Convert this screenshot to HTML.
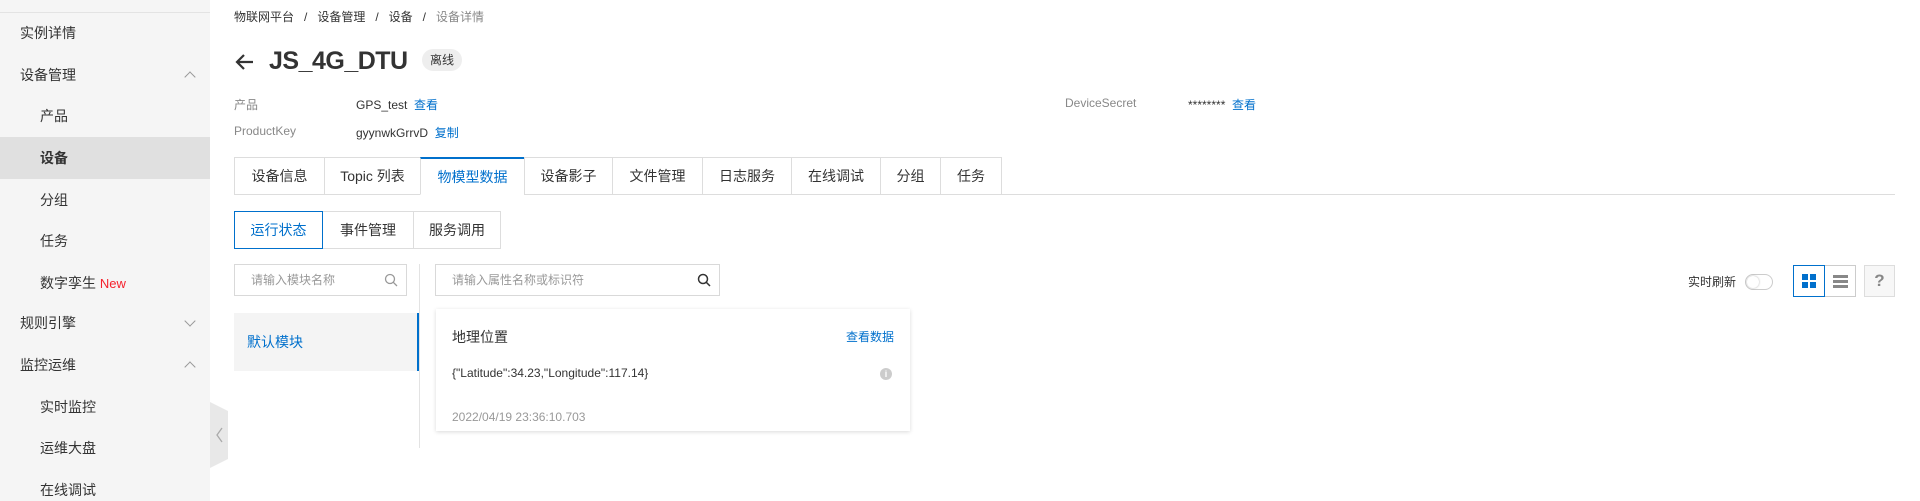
<!DOCTYPE html>
<html><head><meta charset="utf-8"><style>
*{margin:0;padding:0;box-sizing:border-box}
body{width:1920px;height:501px;overflow:hidden;background:#fff;font-family:"Liberation Sans","Noto Sans CJK SC",sans-serif;color:#333;position:relative;font-size:14px}
.a{position:absolute;white-space:nowrap}
.side{position:absolute;left:0;top:0;width:210px;height:501px;background:#f5f5f5}
.side .ln{position:absolute;left:0;top:12px;width:210px;height:1px;background:#e3e3e3}
.si{position:absolute;left:20px;font-size:14px;color:#333;line-height:20px}
.sub{left:40px}
.chev{position:absolute;left:186px;width:8px;height:8px;border-left:1.3px solid #999;border-top:1.3px solid #999}
.up{transform:rotate(45deg)}
.dn{transform:rotate(225deg)}
.blue{color:#0070cc}
.grey{color:#888}
.tabs{position:absolute;top:157px;left:234px;height:38px;display:flex}
.tab{height:38px;border:1px solid #ddd;border-right:none;display:flex;align-items:center;justify-content:center;font-size:14px;color:#333;background:#fff}
.tab:last-child{border-right:1px solid #ddd}
.inp{position:absolute;border:1px solid #d9d9d9;height:32px;font-size:12px;color:#999;line-height:30px;padding-left:16px}
</style></head><body>
<div class="side">
<div class="ln"></div>
<div class="si" style="top:23px">实例详情</div>
<div class="si" style="top:65px">设备管理</div><div class="chev up" style="top:73px"></div>
<div class="si sub" style="top:106px">产品</div>
<div style="position:absolute;left:0;top:137px;width:210px;height:42px;background:#e0e0e0"></div>
<div class="si sub" style="top:148px;font-weight:bold">设备</div>
<div class="si sub" style="top:190px">分组</div>
<div class="si sub" style="top:231px">任务</div>
<div class="si sub" style="top:273px">数字孪生 <span style="color:#f5222d;font-size:13px">New</span></div>
<div class="si" style="top:313px">规则引擎</div><div class="chev dn" style="top:317px"></div>
<div class="si" style="top:355px">监控运维</div><div class="chev up" style="top:363px"></div>
<div class="si sub" style="top:397px">实时监控</div>
<div class="si sub" style="top:438px">运维大盘</div>
<div class="si sub" style="top:480px">在线调试</div>
</div>
<svg class="a" style="left:210px;top:402px" width="19" height="66"><polygon points="0,0 18,9 18,57 0,66" fill="#e8e8e8"/><polyline points="12,26 7,33 12,40" fill="none" stroke="#aaa" stroke-width="1.3"/></svg>

<div class="a" style="left:234px;top:8px;font-size:12px;color:#333">物联网平台 &nbsp;&nbsp;/&nbsp;&nbsp; 设备管理 &nbsp;&nbsp;/&nbsp;&nbsp; 设备 &nbsp;&nbsp;/&nbsp;&nbsp; <span class="grey">设备详情</span></div>
<svg class="a" style="left:235px;top:52px" width="20" height="20"><path d="M18 10H3M9 3L2 10L9 17" fill="none" stroke="#333" stroke-width="2.2"/></svg>
<div class="a" style="left:269px;top:44px;font-size:25px;font-weight:bold;color:#333;line-height:34px;letter-spacing:-0.5px">JS_4G_DTU</div>
<div class="a" style="left:422px;top:49px;width:40px;height:22px;border-radius:11px;background:#eee;font-size:12px;line-height:22px;text-align:center">离线</div>

<div class="a grey" style="left:234px;top:96px;font-size:12px">产品</div>
<div class="a" style="left:356px;top:96px;font-size:12px">GPS_test &nbsp;<span class="blue">查看</span></div>
<div class="a grey" style="left:234px;top:124px;font-size:12px">ProductKey</div>
<div class="a" style="left:356px;top:124px;font-size:12px">gyynwkGrrvD &nbsp;<span class="blue">复制</span></div>
<div class="a grey" style="left:1065px;top:96px;font-size:12px">DeviceSecret</div>
<div class="a" style="left:1188px;top:96px;font-size:12px">******** &nbsp;<span class="blue">查看</span></div>

<div class="a" style="left:234px;top:194px;width:1661px;height:1px;background:#ddd"></div>
<div class="tabs">
<div class="tab" style="width:90px">设备信息</div>
<div class="tab" style="width:96px">Topic 列表</div>
<div class="tab" style="width:104px;color:#0070cc;border-top:2px solid #0070cc;border-bottom-color:#fff">物模型数据</div>
<div class="tab" style="width:88px">设备影子</div>
<div class="tab" style="width:90px">文件管理</div>
<div class="tab" style="width:89px">日志服务</div>
<div class="tab" style="width:89px">在线调试</div>
<div class="tab" style="width:60px">分组</div>
<div class="tab" style="width:62px">任务</div>
</div>

<div class="tabs" style="top:211px">
<div class="tab" style="width:89px;border:1px solid #0070cc;color:#0070cc">运行状态</div>
<div class="tab" style="width:90px;border-left:none">事件管理</div>
<div class="tab" style="width:88px">服务调用</div>
</div>

<div class="inp" style="left:234px;top:264px;width:173px">请输入模块名称</div>
<svg class="a" style="left:384px;top:273px" width="14" height="14"><circle cx="6" cy="6" r="4.5" fill="none" stroke="#999" stroke-width="1.3"/><path d="M9.3 9.3L13 13" stroke="#999" stroke-width="1.3"/></svg>
<div class="a" style="left:419px;top:264px;width:1px;height:184px;background:#e3e3e3"></div>
<div class="a" style="left:234px;top:313px;width:185px;height:58px;background:#f4f4f4;border-right:2px solid #0070cc"></div>
<div class="a blue" style="left:247px;top:332px;font-size:14px">默认模块</div>

<div class="inp" style="left:435px;top:264px;width:285px">请输入属性名称或标识符</div>
<svg class="a" style="left:697px;top:273px" width="14" height="14"><circle cx="6" cy="6" r="4.5" fill="none" stroke="#333" stroke-width="1.5"/><path d="M9.3 9.3L13 13" stroke="#333" stroke-width="1.5"/></svg>

<div class="a" style="left:436px;top:309px;width:474px;height:122px;background:#fff;box-shadow:0 1px 4px rgba(0,0,0,.15)"></div>
<div class="a" style="left:452px;top:327px;font-size:14px">地理位置</div>
<div class="a blue" style="left:846px;top:328px;font-size:12px">查看数据</div>
<div class="a" style="left:452px;top:366px;font-size:12px">{"Latitude":34.23,"Longitude":117.14}</div>
<div class="a" style="left:880px;top:368px;width:12px;height:12px;border-radius:50%;background:#ccc;color:#fff;font-size:9px;font-weight:bold;text-align:center;line-height:12px">i</div>
<div class="a" style="left:452px;top:410px;font-size:12px;color:#999">2022/04/19 23:36:10.703</div>

<div class="a" style="left:1688px;top:273px;font-size:12px">实时刷新</div>
<div class="a" style="left:1745px;top:274px;width:28px;height:16px;border:1px solid #ccc;border-radius:8px;background:#fff"><div style="position:absolute;left:1px;top:1px;width:12px;height:12px;border-radius:50%;background:#fff;box-shadow:0 0 2px rgba(0,0,0,.3)"></div></div>
<div class="a" style="left:1793px;top:265px;width:32px;height:32px;border:1px solid #0070cc;background:#fff"></div>
<svg class="a" style="left:1802px;top:274px" width="14" height="14"><rect x="0" y="0" width="6" height="6" fill="#0070cc"/><rect x="8" y="0" width="6" height="6" fill="#0070cc"/><rect x="0" y="8" width="6" height="6" fill="#0070cc"/><rect x="8" y="8" width="6" height="6" fill="#0070cc"/></svg>
<div class="a" style="left:1825px;top:265px;width:31px;height:32px;border:1px solid #ccc;border-left:none"></div>
<svg class="a" style="left:1833px;top:275px" width="15" height="13"><rect y="0" width="15" height="3" fill="#888"/><rect y="5" width="15" height="3" fill="#888"/><rect y="10" width="15" height="3" fill="#888"/></svg>
<div class="a" style="left:1864px;top:265px;width:31px;height:32px;border:1px solid #ddd;background:#f7f7f7;color:#888;font-weight:bold;font-size:17px;text-align:center;line-height:30px">?</div>
</body></html>
